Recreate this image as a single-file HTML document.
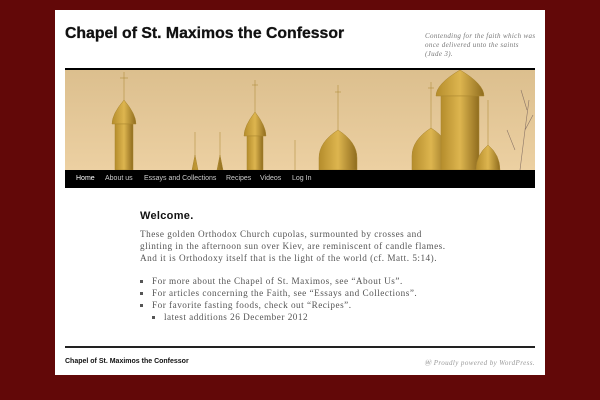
<!DOCTYPE html>
<html><head><style>
body{margin:0;width:600px;height:400px;background:#620808;font-family:"Liberation Sans",sans-serif;position:relative;overflow:hidden}
.page{position:absolute;left:55px;top:10px;width:490px;height:365px;background:#fff}
.t{position:absolute;left:10px;top:15px;font-size:15.8px;font-weight:bold;color:#111;font-family:"Liberation Sans",sans-serif;-webkit-text-stroke:.3px #111}
.d{position:absolute;left:370px;top:22px;width:120px;font:italic 7px/9px "Liberation Serif",serif;color:#777;letter-spacing:.35px;white-space:nowrap}
.img{position:absolute;left:10px;top:58px;width:470px;height:102px;border-top:2px solid #000}
.nav{position:absolute;left:10px;top:160px;width:470px;height:18px;background:#000;font-size:7px;color:#ccc}
.nav span{position:absolute;top:5px}
.c{position:absolute;left:85px;top:200px;width:340px;color:#555;font:9.2px/12px "Liberation Serif",serif;letter-spacing:.5px;white-space:nowrap}
h1{font:bold 11px "Liberation Sans",sans-serif;color:#111;margin:0 0 6px;letter-spacing:.3px}
ul{margin:11px 0 0;padding-left:12px;list-style:square}
ul ul{margin:0}
li{line-height:12px}
.fl{position:absolute;left:10px;top:336px;width:470px;border-top:2px solid #222}
.ft{position:absolute;left:10px;top:348px;font-size:7px;font-weight:bold;color:#111}
.fr{position:absolute;right:10px;top:348px;font:italic 7px "Liberation Serif",serif;color:#999;letter-spacing:.4px}
</style></head><body>
<div class="page">
<div class="t">Chapel of St. Maximos the Confessor</div>
<div class="d">Contending for the faith which was<br>once delivered unto the saints<br>(Jude 3).</div>
<div class="img"><svg width="470" height="100" viewBox="0 0 470 100">
<defs><linearGradient id="g" x1="0" y1="0" x2="0" y2="1"><stop offset="0" stop-color="#dcbf8e"/><stop offset="1" stop-color="#ecd0a2"/></linearGradient>
<linearGradient id="au" x1="0" x2="1"><stop offset="0" stop-color="#b58d2c"/><stop offset=".5" stop-color="#ddb54f"/><stop offset="1" stop-color="#8f6c1e"/></linearGradient></defs>
<rect width="470" height="100" fill="url(#g)"/>
<g fill="url(#au)" stroke="#a9852f" stroke-width=".5">
<path d="M59 2v30 M55 8h8" fill="none"/><path d="M59 30q-12 14-12 24h24q0-10-12-24z"/><rect x="50" y="54" width="18" height="46"/>
<path d="M190 10v35M187 15h6" fill="none"/><path d="M190 42q-11 14-11 24h22q0-10-11-24z"/><rect x="182" y="66" width="16" height="34"/>
<path d="M273 15v50M270 22h6" fill="none"/><path d="M273 60q-19 12-19 28v12h38v-12q0-16-19-28z"/>
<path d="M366 12v50M363 18h6" fill="none"/><path d="M366 58q-19 12-19 28v14h38v-14q0-16-19-28z"/>
<path d="M395 0q-24 14-24 26h48q0-12-24-26z"/><rect x="376" y="26" width="38" height="74"/>
<path d="M423 30v50" fill="none"/><path d="M423 75q-12 10-12 25h24q0-15-12-25z"/>
<path d="M130 62v38M155 62v38M230 70v30" fill="none"/><path d="M130 85l-3 15h6zM155 85l-3 15h6z"/>
</g>
<g stroke="#8a7466" stroke-width=".6" fill="none"><path d="M455 100l5-40 4-30M460 60l8-15M450 80l-8-20M462 40l-6-20"/></g>
</svg></div>
<div class="nav"><span style="left:11px;color:#fff">Home</span><span style="left:40px">About us</span><span style="left:79px">Essays and Collections</span><span style="left:161px">Recipes</span><span style="left:195px">Videos</span><span style="left:227px">Log In</span></div>
<div class="c"><h1>Welcome.</h1>These golden Orthodox Church cupolas, surmounted by crosses and<br>glinting in the afternoon sun over Kiev, are reminiscent of candle flames.<br>And it is Orthodoxy itself that is the light of the world (cf. Matt. 5:14).
<ul><li>For more about the Chapel of St. Maximos, see “About Us”.</li><li>For articles concerning the Faith, see “Essays and Collections”.</li><li>For favorite fasting foods, check out “Recipes”.<ul><li>latest additions 26 December 2012</li></ul></li></ul></div>
<div class="fl"></div>
<div class="ft">Chapel of St. Maximos the Confessor</div>
<div class="fr">Ⓦ Proudly powered by WordPress.</div>
</div>
</body></html>
